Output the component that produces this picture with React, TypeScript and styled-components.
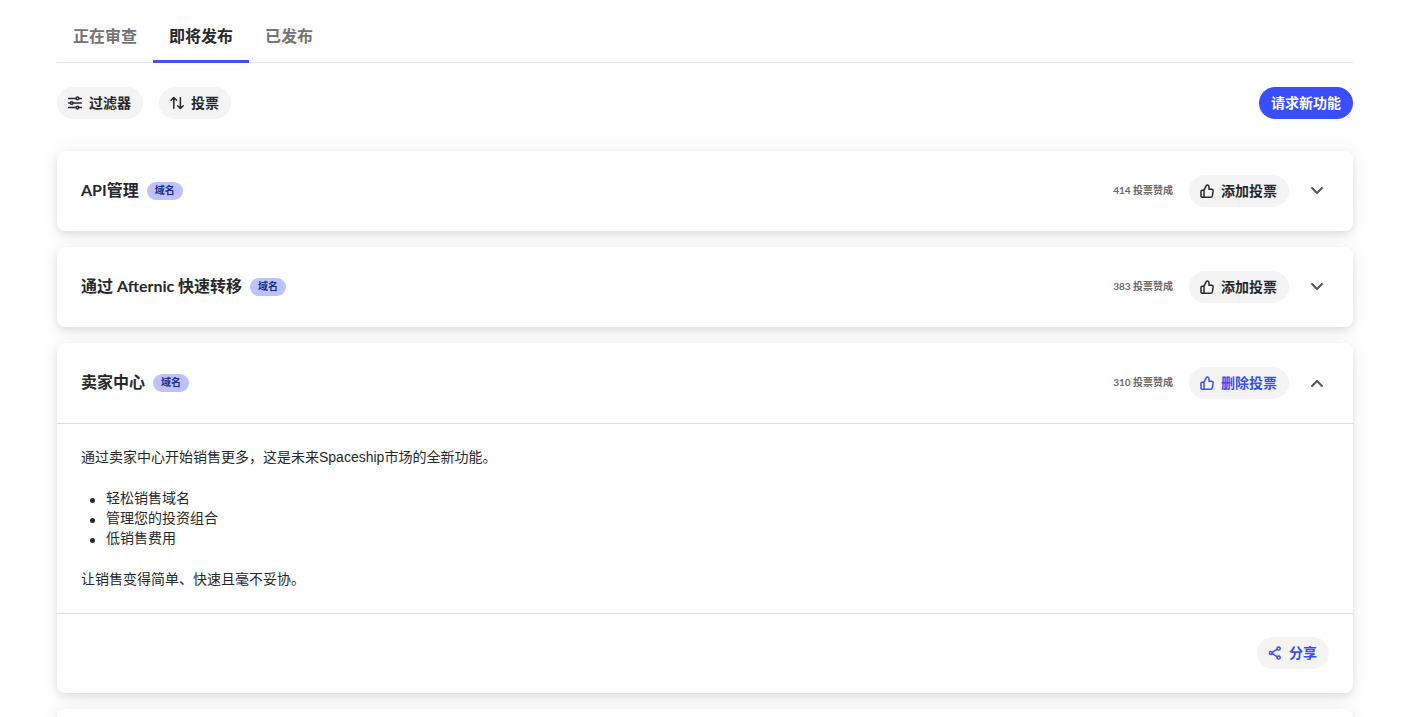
import React, { useState } from "react";
import styled, { createGlobalStyle, css } from "styled-components";

const GlobalStyle = createGlobalStyle`
  *, *::before, *::after { box-sizing: border-box; }
  body {
    margin: 0;
    background: #fff;
    color: #26282c;
    font-family: "Liberation Sans", "Noto Sans CJK SC", sans-serif;
    font-size: 14px;
    line-height: 20px;
  }
  button { font: inherit; color: inherit; border: 0; margin: 0; cursor: pointer; }
`;

const Page = styled.main`
  height: 100vh;
  overflow: hidden;
  padding: 0 62px 0 57px;
`;

const Tabs = styled.div`
  display: flex;
  border-bottom: 1px solid #e6e6e8;
`;

const Tab = styled.button<{ $active?: boolean }>`
  padding: 25px 16px 11px;
  margin-bottom: -1px;
  background: none;
  font-size: 16px;
  line-height: 24px;
  font-weight: 700;
  color: #737373;
  border-bottom: 3px solid transparent;
  ${(p) =>
    p.$active &&
    css`
      color: #26282c;
      border-image: linear-gradient(#4152e6, #4152e6) 1;
    `}
`;

const Toolbar = styled.div`
  display: flex;
  align-items: center;
  gap: 16px;
  padding: 24px 0 32px;
`;

const Pill = styled.button<{ $accent?: boolean }>`
  display: inline-flex;
  align-items: center;
  gap: 6px;
  height: 32px;
  padding: 0 12px 0 10px;
  border-radius: 16px;
  background: #f4f4f5;
  color: ${(p) => (p.$accent ? "#3b4ef0" : "#26282c")};
  font-size: 14px;
  font-weight: 700;
  white-space: nowrap;
`;

const PrimaryPill = styled(Pill)`
  margin-left: auto;
  padding: 0 12px;
  background: #394eff;
  color: #fff;
`;

const List = styled.div`
  display: flex;
  flex-direction: column;
  gap: 16px;
`;

const Card = styled.article`
  min-height: 80px;
  background: #fff;
  border-radius: 8px;
  box-shadow: 0 4px 8px rgba(0, 0, 0, 0.1), 0 0 24px rgba(0, 0, 0, 0.05);
`;

const CardHeader = styled.header`
  display: flex;
  align-items: center;
  gap: 16px;
  padding: 24px;
`;

const Heading = styled.div`
  display: flex;
  align-items: center;
  gap: 8px;
  margin-right: auto;
`;

const Title = styled.h2`
  margin: 0;
  padding-bottom: 2px;
  font-family: Lato, "Noto Sans CJK SC", sans-serif;
  font-size: 16px;
  line-height: 24px;
  font-weight: 700;
`;

const Badge = styled.span`
  padding: 0 8px;
  border-radius: 9px;
  background: #bbc2fd;
  color: #202b8f;
  font-size: 10px;
  line-height: 18px;
  font-weight: 700;
`;

const Votes = styled.span`
  padding-bottom: 2px;
  color: #6b6b6b;
  font-family: Lato, "Noto Sans CJK SC", sans-serif;
  font-size: 10px;
  line-height: 16px;
  font-weight: 700;
`;

const Toggle = styled.button`
  display: flex;
  align-items: center;
  justify-content: center;
  width: 24px;
  height: 24px;
  padding: 0;
  background: none;
  color: #555;
`;

const CardBody = styled.div`
  display: flex;
  flex-direction: column;
  gap: 21px;
  padding: 23px 24px 24px;
  border-top: 1px solid #dedee0;
`;

const Text = styled.p`
  margin: 0;
`;

const Bullets = styled.ul`
  margin: 0;
  padding: 0 0 0 9px;
  list-style: none;
`;

const Bullet = styled.li`
  display: flex;
  align-items: center;
  gap: 11px;

  &::before {
    content: "";
    width: 5px;
    height: 5px;
    margin-top: 5px;
    border-radius: 50%;
    background: currentColor;
  }
`;

const CardFooter = styled.footer`
  display: flex;
  justify-content: flex-end;
  padding: 23px 24px 24px;
  border-top: 1px solid #dedee0;
`;

const Icon = styled.svg.attrs({ viewBox: "0 0 16 16", "aria-hidden": true })<{
  $bold?: boolean;
}>`
  flex: none;
  width: 16px;
  height: 16px;
  fill: none;
  stroke: currentColor;
  stroke-width: ${(p) => (p.$bold ? 2 : 1.5)};
  stroke-linecap: round;
  stroke-linejoin: round;
`;

const FilterIcon = () => (
  <Icon>
    <path d="M1.7 3.4H9M12 3.4H14.3M1.7 8H3.2M6.2 8H14.3M1.7 12.6H9M12 12.6H14.3" />
    <circle cx="10.5" cy="3.4" r="1.3" />
    <circle cx="4.7" cy="8" r="1.3" />
    <circle cx="10.5" cy="12.6" r="1.3" />
  </Icon>
);

const SortIcon = () => (
  <Icon>
    <path d="M4.8 13.3V2.5M2 5.3L4.8 2.5L7.6 5.3M11.4 2.7V13.5M8.6 10.7L11.4 13.5L14.2 10.7" />
  </Icon>
);

const ThumbIcon = () => (
  <Icon>
    <path d="M5 7.2H3Q2 7.2 2 8.2V13.3Q2 14.3 3 14.3H5ZM5 7.2L7.3 2.6Q7.7 1.9 8.5 2Q10 2.3 10 3.8V6.3H12.5Q14.3 6.4 14.1 8.2L13.4 12.7Q13.1 14.3 11.6 14.3H5" />
  </Icon>
);

const ShareIcon = () => (
  <Icon>
    <path d="M5.3 7.3L10 4.4M5.3 8.7L10 11.6" />
    <circle cx="3.9" cy="8" r="1.5" />
    <circle cx="11.6" cy="3.5" r="1.6" />
    <circle cx="11.6" cy="12.5" r="1.6" />
  </Icon>
);

const ChevronIcon = ({ up }: { up: boolean }) => (
  <Icon $bold>
    <path d={up ? "M3 11L8 6L13 11" : "M3 5L8 10L13 5"} />
  </Icon>
);

interface Feature {
  title: string;
  votes: number;
  voted?: boolean;
  intro?: string;
  points?: string[];
  outro?: string;
}

const features: Feature[] = [
  { title: "API管理", votes: 414 },
  { title: "通过 Afternic 快速转移", votes: 383 },
  {
    title: "卖家中心",
    votes: 310,
    voted: true,
    intro: "通过卖家中心开始销售更多，这是未来Spaceship市场的全新功能。",
    points: ["轻松销售域名", "管理您的投资组合", "低销售费用"],
    outro: "让销售变得简单、快速且毫不妥协。",
  },
];

function FeatureCard({ feature }: { feature: Feature }) {
  const [open, setOpen] = useState(Boolean(feature.intro));
  return (
    <Card>
      <CardHeader>
        <Heading>
          <Title>{feature.title}</Title>
          <Badge>域名</Badge>
        </Heading>
        <Votes>{feature.votes} 投票赞成</Votes>
        <Pill type="button" $accent={feature.voted}>
          <ThumbIcon />
          {feature.voted ? "删除投票" : "添加投票"}
        </Pill>
        <Toggle
          type="button"
          aria-label={feature.title}
          aria-expanded={open}
          onClick={() => setOpen(!open)}
        >
          <ChevronIcon up={open} />
        </Toggle>
      </CardHeader>
      {open && feature.intro && (
        <>
          <CardBody>
            <Text>{feature.intro}</Text>
            <Bullets>
              {feature.points?.map((point) => (
                <Bullet key={point}>{point}</Bullet>
              ))}
            </Bullets>
            <Text>{feature.outro}</Text>
          </CardBody>
          <CardFooter>
            <Pill type="button" $accent>
              <ShareIcon />
              分享
            </Pill>
          </CardFooter>
        </>
      )}
    </Card>
  );
}

export default function App() {
  return (
    <>
      <GlobalStyle />
      <Page>
        <Tabs role="tablist">
          <Tab type="button" role="tab">正在审查</Tab>
          <Tab type="button" role="tab" aria-selected $active>即将发布</Tab>
          <Tab type="button" role="tab">已发布</Tab>
        </Tabs>
        <Toolbar>
          <Pill type="button"><FilterIcon />过滤器</Pill>
          <Pill type="button"><SortIcon />投票</Pill>
          <PrimaryPill type="button">请求新功能</PrimaryPill>
        </Toolbar>
        <List>
          {features.map((feature) => (
            <FeatureCard key={feature.title} feature={feature} />
          ))}
          <Card />
        </List>
      </Page>
    </>
  );
}
